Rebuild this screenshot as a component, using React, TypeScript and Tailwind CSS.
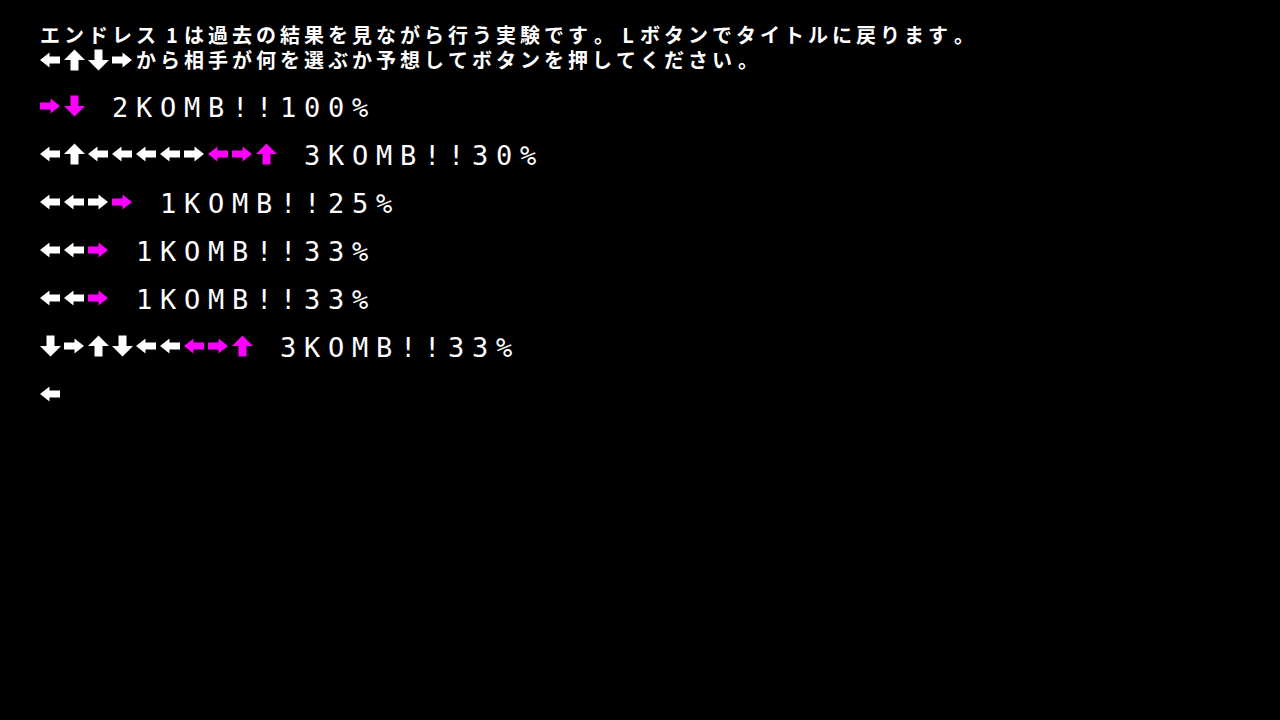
import React from "react";

type Dir = "left" | "right" | "up" | "down";
type Tone = "w" | "m";

const ARROW_PATHS: Record<Dir, string> = {
  right: "M0 8.5H10.5V4.5L20 12L10.5 19.5V15.5H0Z",
  left: "M20 8.5H9.5V4.5L0 12L9.5 19.5V15.5H20Z",
  down: "M6.5 1.5H14.5V12H21L10.5 22.5L0 12H6.5Z",
  up: "M10.5 1.5L21 12H14.5V22.5H6.5V12H0Z",
};

function Arrow({ dir, tone }: { dir: Dir; tone: Tone }) {
  return (
    <svg
      width={24}
      height={24}
      viewBox="0 0 24 24"
      className="shrink-0 block"
      aria-hidden="true"
    >
      <path d={ARROW_PATHS[dir]} fill={tone === "m" ? "#ff00ff" : "#ffffff"} />
    </svg>
  );
}

const CODE: Record<string, Dir> = { L: "left", R: "right", U: "up", D: "down" };

// White arrows first, then the magenta ones
function ArrowSeq({ white, magenta }: { white: string; magenta: string }) {
  return (
    <div className="flex items-center shrink-0">
      {white.split("").map((c, i) => (
        <Arrow key={"w" + i} dir={CODE[c]} tone="w" />
      ))}
      {magenta.split("").map((c, i) => (
        <Arrow key={"m" + i} dir={CODE[c]} tone="m" />
      ))}
    </div>
  );
}

// Message text laid out on a 24px character grid
function GridText({ text }: { text: string }) {
  return (
    <>
      {Array.from(text).map((ch, i) => {
        const centered = ch === "。" || ch === "1" || ch === "L";
        return (
          <span
            key={i}
            className={
              "inline-block w-[24px] shrink-0 " +
              (centered ? "text-center" : "text-left")
            }
          >
            {ch}
          </span>
        );
      })}
    </>
  );
}

const rows: { white: string; magenta: string; text: string }[] = [
  { white: "", magenta: "RD", text: "2KOMB!!100%" },
  { white: "LULLLLR", magenta: "LRU", text: "3KOMB!!30%" },
  { white: "LLR", magenta: "R", text: "1KOMB!!25%" },
  { white: "LL", magenta: "R", text: "1KOMB!!33%" },
  { white: "LL", magenta: "R", text: "1KOMB!!33%" },
  { white: "DRUDLL", magenta: "LRU", text: "3KOMB!!33%" },
  { white: "L", magenta: "", text: "" },
];

export default function App() {
  return (
    <div className="w-[1280px] h-[720px] bg-black text-white overflow-hidden pl-[40px] pt-[22px]">
      <div
        className="text-[20px] leading-[25px] font-bold"
        style={{ fontFamily: '"Noto Sans CJK JP", "Noto Sans", sans-serif' }}
      >
        <div className="flex items-center h-[25px] whitespace-nowrap">
          <GridText text="エンドレス1は過去の結果を見ながら行う実験です。Lボタンでタイトルに戻ります。" />
        </div>
        <div className="flex items-center h-[25px] whitespace-nowrap">
          <ArrowSeq white="LUDR" magenta="" />
          <GridText text="から相手が何を選ぶか予想してボタンを押してください。" />
        </div>
      </div>

      <div className="mt-[10px] flex flex-col">
        {rows.map((r, i) => (
          <div key={i} className="flex items-center h-[48px]">
            <ArrowSeq white={r.white} magenta={r.magenta} />
            {r.text && (
              <span
                className="ml-[24px] pt-[4px] text-[27px] leading-[44px] tracking-[7.74px] whitespace-nowrap"
                style={{ fontFamily: '"DejaVu Sans Mono", "Liberation Mono", monospace' }}
              >
                {r.text}
              </span>
            )}
          </div>
        ))}
      </div>
    </div>
  );
}
